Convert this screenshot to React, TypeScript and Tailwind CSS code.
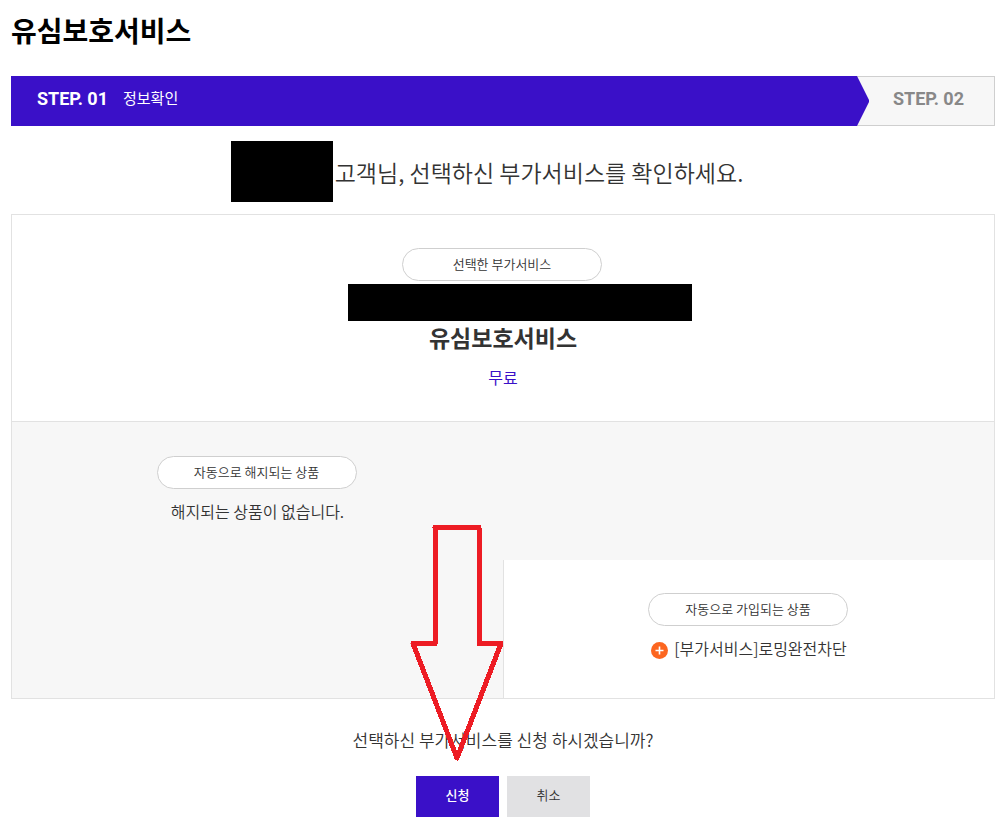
import type { ReactNode } from "react";

const steps = {
  current: { no: "STEP. 01", label: "정보확인" },
  next: { no: "STEP. 02" },
};

const joinedProducts = ["[부가서비스]로밍완전차단"];

function Pill({ children }: { children: ReactNode }) {
  return (
    <h3 className="mr-0.5 flex h-[33px] w-[200px] items-center justify-center rounded-full border border-[#cfcfcf] bg-white pb-0.5 text-[13px] leading-5 font-[350]">
      {children}
    </h3>
  );
}

function StepBar() {
  return (
    <ol className="flex h-[50px]">
      <li className="relative z-10 flex flex-1 items-center gap-[15px] bg-[#3a10c8] pb-1 pl-[26px] text-white">
        <strong className="font-[Roboto] text-lg font-bold">{steps.current.no}</strong>
        <span className="pb-0.5 text-[15px] font-normal">{steps.current.label}</span>
        <svg className="absolute top-0 left-full h-full w-3" viewBox="0 0 12 50" preserveAspectRatio="none" aria-hidden="true">
          <path d="M0 0L12 24V26L0 50Z" fill="#3a10c8" />
        </svg>
      </li>
      <li className="flex w-[138px] items-center border border-l-0 border-[#cfcfcf] bg-[#f7f7f7] pb-1 pl-9 text-[#888]">
        <strong className="font-[Roboto] text-lg font-bold">{steps.next.no}</strong>
      </li>
    </ol>
  );
}

function PlusIcon() {
  return (
    <svg className="mt-1 size-[17px]" viewBox="0 0 17 17" aria-hidden="true">
      <circle cx="8.5" cy="8.5" r="8.5" fill="#fc6620" />
      <path d="M8.5 4.5v8M4.5 8.5h8" stroke="#fff" strokeWidth="1.6" />
    </svg>
  );
}

function GuideArrow() {
  return (
    <svg
      className="pointer-events-none absolute bottom-full left-1/2 mb-3.5 h-[238px] w-[95px] max-w-none -translate-x-1/2"
      viewBox="0 0 95 238"
      aria-hidden="true"
    >
      <path
        d="M24.5 3.5H68.5V119.5H90.5L46.5 234L2.5 119.5H24.5Z"
        fill="none"
        stroke="#ed1c24"
        strokeWidth="5"
        strokeLinejoin="round"
        shapeRendering="crispEdges"
      />
    </svg>
  );
}

export default function App() {
  return (
    <main className="bg-white pr-2.5 pl-[11px] font-['Noto_Sans_CJK_KR','Noto_Sans',sans-serif] font-[350] text-[#333]">
      <h1 className="pt-2.5 pb-[26px] text-[28px] leading-10 font-bold text-black">유심보호서비스</h1>

      <StepBar />

      <div className="mt-[15px] flex items-center justify-center gap-0.5 pr-8">
        <span className="h-[61px] w-[102px] bg-black" />
        <h2 className="text-[23px] leading-8 font-[350]">고객님, 선택하신 부가서비스를 확인하세요.</h2>
      </div>

      <div className="mt-3 border border-[#e2e2e2]">
        <section className="flex flex-col items-center border-b border-[#e2e2e2] pt-[33px] pb-[30px]">
          <Pill>선택한 부가서비스</Pill>
          <span className="mt-[3px] ml-[34px] h-[37px] w-[344px] bg-black" />
          <p className="text-[23px] leading-8 font-bold">유심보호서비스</p>
          <p className="mt-2.5 text-base leading-7 font-normal text-[#3a10c8]">무료</p>
        </section>

        <div className="grid grid-cols-2 bg-[#f7f7f7]">
          <section className="flex flex-col items-center pt-[34px]">
            <Pill>자동으로 해지되는 상품</Pill>
            <p className="mt-2 text-base leading-7">해지되는 상품이 없습니다.</p>
          </section>
          <section className="mt-[138px] flex flex-col items-center border-l border-[#e2e2e2] bg-white pt-[33px] pb-9">
            <Pill>자동으로 가입되는 상품</Pill>
            <ul className="mt-2">
              {joinedProducts.map((name) => (
                <li key={name} className="flex items-center gap-1.5 text-base leading-7">
                  <PlusIcon />
                  {name}
                </li>
              ))}
            </ul>
          </section>
        </div>
      </div>

      <p className="mt-[27px] text-center text-[17px] leading-7">선택하신 부가서비스를 신청 하시겠습니까?</p>

      <div className="mt-[22px] flex justify-center gap-2 text-[13px]">
        <div className="relative">
          <button type="button" className="h-[41px] w-[83px] bg-[#3a10c8] pb-1 font-medium text-white">
            신청
          </button>
          <GuideArrow />
        </div>
        <button type="button" className="h-[41px] w-[83px] bg-[#e1e1e3] pb-1">
          취소
        </button>
      </div>
    </main>
  );
}
